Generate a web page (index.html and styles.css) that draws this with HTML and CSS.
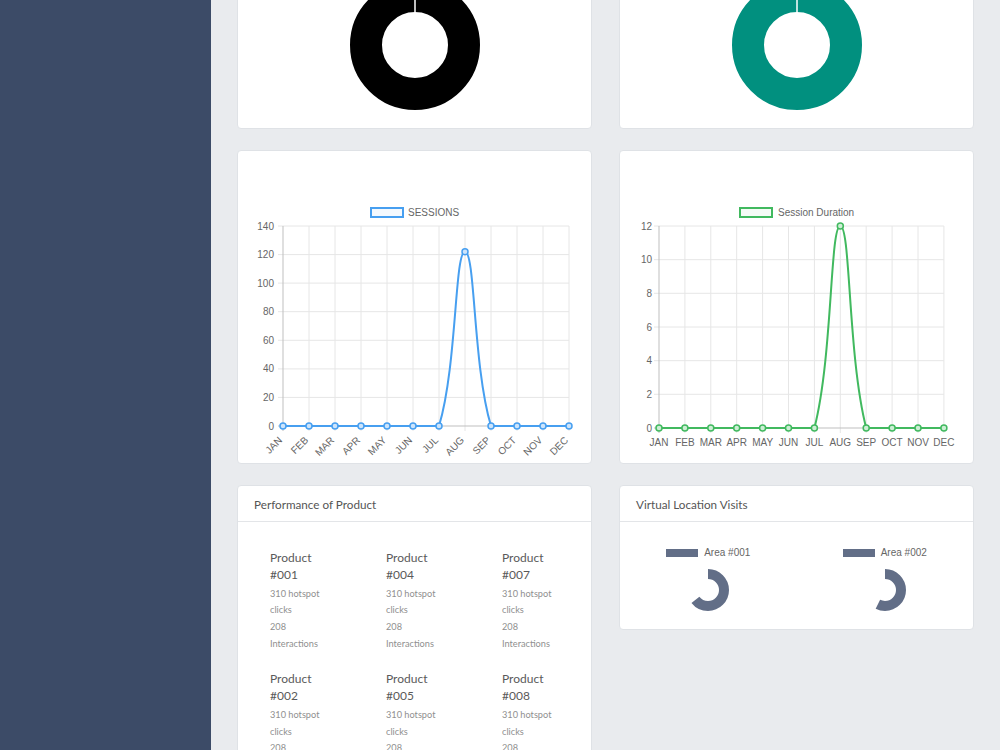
FILE: index.html
```html
<!DOCTYPE html>
<html lang="en">

<head>
    <meta charset="UTF-8">
    <meta name="viewport" content="width=device-width, initial-scale=1.0">
    <title>Dashboard</title>
    <link rel="stylesheet" href="styles.css">
</head>

<body>
    <aside class="sidebar"></aside>
    <main class="content">
        <div class="grid">
            <!-- doughnut totals -->
            <section class="card card-donut">
                <svg class="donut" width="130" height="130" viewBox="0 0 130 130">
                    <circle cx="65" cy="65" r="49" fill="none" stroke="#000" stroke-width="32" />
                    <line x1="65" y1="0" x2="65" y2="33" stroke="#fff" stroke-width="1.5" />
                </svg>
            </section>
            <section class="card card-donut">
                <svg class="donut" width="130" height="130" viewBox="0 0 130 130">
                    <circle cx="65" cy="65" r="49" fill="none" stroke="#01907f" stroke-width="32" />
                    <line x1="65" y1="0" x2="65" y2="33" stroke="#fff" stroke-width="1.5" />
                </svg>
            </section>

            <!-- sessions -->
            <section class="card card-chart">
                <svg class="chart" width="353" height="312" viewBox="0 0 353 312">
                    <rect x="133" y="57" width="32" height="9" fill="#f4f9fe" stroke="#479ff0" stroke-width="2" />
                    <text class="legend-text" x="170" y="65">SESSIONS</text>
                    <path class="grid-line" d="M71,75V280M97,75V280M123,75V280M149,75V280M175,75V280M201,75V280M227,75V280M253,75V280M279,75V280M305,75V280M331,75V280M40,75H331M40,103.6H331M40,132.1H331M40,160.7H331M40,189.3H331M40,217.9H331M40,246.4H331" />
                    <path class="axis-line" d="M45,75V280M40,275H331" />
                    <g class="tick-y">
                        <text x="36" y="78.5">140</text>
                        <text x="36" y="107.1">120</text>
                        <text x="36" y="135.6">100</text>
                        <text x="36" y="164.2">80</text>
                        <text x="36" y="192.8">60</text>
                        <text x="36" y="221.4">40</text>
                        <text x="36" y="249.9">20</text>
                        <text x="36" y="278.5">0</text>
                    </g>
                    <g class="tick-x-rot">
                        <text transform="translate(43,288) rotate(-45)">JAN</text>
                        <text transform="translate(69,288) rotate(-45)">FEB</text>
                        <text transform="translate(95,288) rotate(-45)">MAR</text>
                        <text transform="translate(121,288) rotate(-45)">APR</text>
                        <text transform="translate(147,288) rotate(-45)">MAY</text>
                        <text transform="translate(173,288) rotate(-45)">JUN</text>
                        <text transform="translate(199,288) rotate(-45)">JUL</text>
                        <text transform="translate(225,288) rotate(-45)">AUG</text>
                        <text transform="translate(251,288) rotate(-45)">SEP</text>
                        <text transform="translate(277,288) rotate(-45)">OCT</text>
                        <text transform="translate(303,288) rotate(-45)">NOV</text>
                        <text transform="translate(329,288) rotate(-45)">DEC</text>
                    </g>
                    <path d="M45,275L201,275C219.1,214.4 216.6,100.7 227,100.7C237.4,100.7 234.9,214.4 253,275L331,275" fill="none" stroke="#479ff0" stroke-width="2" />
                    <g fill="#cde4fb" stroke="#479ff0" stroke-width="1.5">
                        <circle cx="45" cy="275" r="3" />
                        <circle cx="71" cy="275" r="3" />
                        <circle cx="97" cy="275" r="3" />
                        <circle cx="123" cy="275" r="3" />
                        <circle cx="149" cy="275" r="3" />
                        <circle cx="175" cy="275" r="3" />
                        <circle cx="201" cy="275" r="3" />
                        <circle cx="227" cy="100.7" r="3" />
                        <circle cx="253" cy="275" r="3" />
                        <circle cx="279" cy="275" r="3" />
                        <circle cx="305" cy="275" r="3" />
                        <circle cx="331" cy="275" r="3" />
                    </g>
                </svg>
            </section>

            <!-- session duration -->
            <section class="card card-chart">
                <svg class="chart" width="353" height="312" viewBox="0 0 353 312">
                    <rect x="120" y="57" width="32" height="9" fill="#f5fbf6" stroke="#41b95f" stroke-width="2" />
                    <text class="legend-text" x="158" y="65">Session Duration</text>
                    <path class="grid-line" d="M64.9,75V282M90.8,75V282M116.7,75V282M142.6,75V282M168.5,75V282M194.4,75V282M220.3,75V282M246.2,75V282M272.1,75V282M298,75V282M323.9,75V282M34,75H323.9M34,108.7H323.9M34,142.3H323.9M34,176H323.9M34,209.7H323.9M34,243.3H323.9" />
                    <path class="axis-line" d="M39,75V282M34,277H323.9" />
                    <g class="tick-y">
                        <text x="32" y="78.5">12</text>
                        <text x="32" y="112.2">10</text>
                        <text x="32" y="145.8">8</text>
                        <text x="32" y="179.5">6</text>
                        <text x="32" y="213.2">4</text>
                        <text x="32" y="246.8">2</text>
                        <text x="32" y="280.5">0</text>
                    </g>
                    <g class="tick-x">
                        <text x="39" y="295">JAN</text>
                        <text x="64.9" y="295">FEB</text>
                        <text x="90.8" y="295">MAR</text>
                        <text x="116.7" y="295">APR</text>
                        <text x="142.6" y="295">MAY</text>
                        <text x="168.5" y="295">JUN</text>
                        <text x="194.4" y="295">JUL</text>
                        <text x="220.3" y="295">AUG</text>
                        <text x="246.2" y="295">SEP</text>
                        <text x="272.1" y="295">OCT</text>
                        <text x="298" y="295">NOV</text>
                        <text x="323.9" y="295">DEC</text>
                    </g>
                    <path d="M39,277L194.4,277C212.8,205.3 209.9,75 220.3,75C230.7,75 227.8,205.3 246.2,277L323.9,277" fill="none" stroke="#41b95f" stroke-width="2" />
                    <g fill="#cdeed5" stroke="#41b95f" stroke-width="1.5">
                        <circle cx="39" cy="277" r="3" />
                        <circle cx="64.9" cy="277" r="3" />
                        <circle cx="90.8" cy="277" r="3" />
                        <circle cx="116.7" cy="277" r="3" />
                        <circle cx="142.6" cy="277" r="3" />
                        <circle cx="168.5" cy="277" r="3" />
                        <circle cx="194.4" cy="277" r="3" />
                        <circle cx="220.3" cy="75" r="3" />
                        <circle cx="246.2" cy="277" r="3" />
                        <circle cx="272.1" cy="277" r="3" />
                        <circle cx="298" cy="277" r="3" />
                        <circle cx="323.9" cy="277" r="3" />
                    </g>
                </svg>
            </section>

            <!-- products -->
            <section class="card card-top">
                <header class="card-header">Performance of Product</header>
                <div class="products">
                    <div class="product">
                        <p class="product-name">Product #001</p>
                        <p class="product-stat">310 hotspot clicks</p>
                        <p class="product-stat">208 Interactions</p>
                    </div>
                    <div class="product">
                        <p class="product-name">Product #002</p>
                        <p class="product-stat">310 hotspot clicks</p>
                        <p class="product-stat">208 Interactions</p>
                    </div>
                    <div class="product">
                        <p class="product-name">Product #003</p>
                        <p class="product-stat">310 hotspot clicks</p>
                        <p class="product-stat">208 Interactions</p>
                    </div>
                    <div class="product">
                        <p class="product-name">Product #004</p>
                        <p class="product-stat">310 hotspot clicks</p>
                        <p class="product-stat">208 Interactions</p>
                    </div>
                    <div class="product">
                        <p class="product-name">Product #005</p>
                        <p class="product-stat">310 hotspot clicks</p>
                        <p class="product-stat">208 Interactions</p>
                    </div>
                    <div class="product">
                        <p class="product-name">Product #006</p>
                        <p class="product-stat">310 hotspot clicks</p>
                        <p class="product-stat">208 Interactions</p>
                    </div>
                    <div class="product">
                        <p class="product-name">Product #007</p>
                        <p class="product-stat">310 hotspot clicks</p>
                        <p class="product-stat">208 Interactions</p>
                    </div>
                    <div class="product">
                        <p class="product-name">Product #008</p>
                        <p class="product-stat">310 hotspot clicks</p>
                        <p class="product-stat">208 Interactions</p>
                    </div>
                    <div class="product">
                        <p class="product-name">Product #009</p>
                        <p class="product-stat">310 hotspot clicks</p>
                        <p class="product-stat">208 Interactions</p>
                    </div>
                </div>
            </section>

            <!-- visits -->
            <section class="card card-top">
                <header class="card-header">Virtual Location Visits</header>
                <div class="visits">
                    <div class="visit">
                        <div class="visit-legend"><span class="swatch"></span>Area #001</div>
                        <svg width="44" height="44" viewBox="0 0 44 44">
                            <circle cx="22" cy="22" r="16" fill="none" stroke="#626e87" stroke-width="10" stroke-dasharray="64.3 200" transform="rotate(-90 22 22)" />
                        </svg>
                    </div>
                    <div class="visit">
                        <div class="visit-legend"><span class="swatch"></span>Area #002</div>
                        <svg width="44" height="44" viewBox="0 0 44 44">
                            <circle cx="22" cy="22" r="16" fill="none" stroke="#626e87" stroke-width="10" stroke-dasharray="57.3 200" transform="rotate(-90 22 22)" />
                        </svg>
                    </div>
                </div>
            </section>
        </div>
    </main>
</body>

</html>
```

FILE: styles.css
```css
* {
    margin: 0;
    padding: 0;
    box-sizing: border-box;
}

html,
body {
    height: 100%;
    overflow: hidden;
}

body {
    display: flex;
    font-family: Lato, "Open Sans", sans-serif;
    background-color: #e9ebee;
    color: #4f4f4f;
}

.sidebar {
    width: 211px;
    flex-shrink: 0;
    background-color: #3c4b67;
}

.content {
    flex: 1;
    min-width: 0;
    padding: 0 26px;
}

.grid {
    display: grid;
    grid-template-columns: repeat(2, minmax(0, 1fr));
    column-gap: 27px;
    row-gap: 21px;
    margin-top: -41px;
}

.card {
    background-color: #fff;
    border: 1px solid #dfe2e6;
    border-radius: 4px;
}

.card-top {
    align-self: start;
}

.card-donut {
    display: flex;
    justify-content: center;
    padding: 20px 0 18px;
}

.donut,
.chart {
    display: block;
}

.card-chart {
    height: 314px;
}

.chart text {
    font-family: "Liberation Sans", Arial, sans-serif;
    font-size: 10px;
    fill: #666;
}

.grid-line {
    fill: none;
    stroke: #e6e6e6;
    stroke-width: 1;
}

.axis-line {
    fill: none;
    stroke: #bfbfbf;
    stroke-width: 1;
}

.tick-y text {
    text-anchor: end;
}

.tick-x text {
    text-anchor: middle;
}

.tick-x-rot text {
    text-anchor: end;
    dominant-baseline: middle;
}

.card-header {
    height: 36px;
    padding: 0 16px;
    display: flex;
    align-items: center;
    border-bottom: 1px solid #e3e5e8;
    font-size: 11.7px;
    color: #555;
}

.products {
    display: grid;
    grid-template-columns: repeat(3, 116px);
    grid-template-rows: repeat(3, auto);
    grid-auto-flow: column;
    row-gap: 19px;
    padding: 28px 32px;
}

.product {
    width: 58px;
}

.product-name {
    font-size: 12px;
    line-height: 16.5px;
    margin-bottom: 2.5px;
    color: #5a5a5a;
}

.product-stat {
    font-size: 9.2px;
    line-height: 16.7px;
    color: #8f8f8f;
}

.visits {
    display: grid;
    grid-template-columns: 1fr 1fr;
    padding: 26px 0 17px;
}

.visit {
    display: flex;
    flex-direction: column;
    align-items: center;
    gap: 11px;
}

.visit-legend {
    display: flex;
    align-items: center;
    gap: 6px;
    height: 9px;
    font-family: "Liberation Sans", Arial, sans-serif;
    font-size: 10px;
    color: #666;
}

.swatch {
    width: 32px;
    height: 8px;
    background-color: #626e87;
}
```
